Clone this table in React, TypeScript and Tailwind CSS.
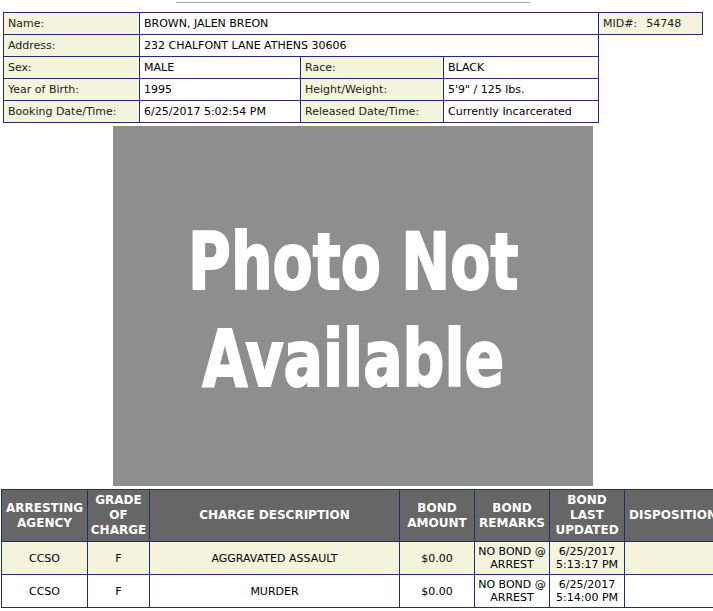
import React from "react";

const NAVY = "bg-[#1f2d7a]";

function Label({ children, className = "" }: { children: React.ReactNode; className?: string }) {
  return (
    <div className={`bg-[#f4f4dc] px-[4px] leading-[21px] h-[21px] text-[#222] whitespace-nowrap ${className}`}>{children}</div>
  );
}
function Value({ children, className = "" }: { children: React.ReactNode; className?: string }) {
  return (
    <div className={`bg-white px-[4px] leading-[21px] h-[21px] text-black whitespace-nowrap ${className}`}>{children}</div>
  );
}

function H({ children }: { children: React.ReactNode }) {
  return (
    <div className="bg-[#666666] text-white font-bold text-[12px] leading-[15px] flex items-center justify-center text-center px-[2px]">
      <span>{children}</span>
    </div>
  );
}
function C({ children, tan }: { children?: React.ReactNode; tan?: boolean }) {
  return (
    <div
      className={`${tan ? "bg-[#f4f4dc]" : "bg-white"} text-black text-[11px] leading-[13px] flex items-center justify-center text-center px-[2px]`}
    >
      <span>{children}</span>
    </div>
  );
}

export default function App() {
  const rows = [
    { tan: true, charge: "AGGRAVATED ASSAULT", upd1: "6/25/2017", upd2: "5:13:17 PM" },
    { tan: false, charge: "MURDER", upd1: "6/25/2017", upd2: "5:14:00 PM" },
  ];
  return (
    <div className="w-[713px] h-[611px] overflow-hidden bg-white text-[11px]" style={{ fontFamily: '"DejaVu Sans", Verdana, sans-serif' }}>
      <div className="mt-[2px] ml-[176px] w-[354px] h-px bg-[#a4a4a4]" />

      <div className="mt-[9px] ml-[3px] flex items-start">
        <div className={`grid grid-cols-[135px_160px_142px_154px] gap-px p-px ${NAVY}`}>
          <Label>Name:</Label>
          <Value className="col-span-3">BROWN, JALEN BREON</Value>
          <Label>Address:</Label>
          <Value className="col-span-3">232 CHALFONT LANE ATHENS 30606</Value>
          <Label>Sex:</Label>
          <Value>MALE</Value>
          <Label>Race:</Label>
          <Value>BLACK</Value>
          <Label>Year of Birth:</Label>
          <Value>1995</Value>
          <Label>Height/Weight:</Label>
          <Value>5'9" / 125 lbs.</Value>
          <Label>Booking Date/Time:</Label>
          <Value>6/25/2017 5:02:54 PM</Value>
          <Label>Released Date/Time:</Label>
          <Value>Currently Incarcerated</Value>
        </div>
        <div className="-ml-px border border-[#1f2d7a] w-[105px] h-[23px] bg-[#f4f4dc] pl-[4px] leading-[21px] text-[#222] whitespace-nowrap">
          MID#:<span className="ml-[9px]">54748</span>
        </div>
      </div>

      <div className="mt-[3px] ml-[113px] w-[480px] h-[360px] bg-[#8e8e8e] flex flex-col items-center pt-[88px]">
        <div className="scale-x-75 text-white font-bold text-[78px] leading-[97px] whitespace-nowrap text-center [-webkit-text-stroke:2px_white]">
          <div>Photo Not</div>
          <div>Available</div>
        </div>
      </div>

      <div className="mt-[3px] ml-[1px]">
        <div
          className={`grid grid-cols-[85px_61px_249px_74px_74px_74px_96px] grid-rows-[51px_32px_32px] gap-px p-px w-max ${NAVY}`}
        >
          <H>ARRESTING AGENCY</H>
          <H>GRADE OF CHARGE</H>
          <H>CHARGE DESCRIPTION</H>
          <H>BOND AMOUNT</H>
          <H>BOND REMARKS</H>
          <H>BOND LAST UPDATED</H>
          <H>DISPOSITION</H>
          {rows.map((r, i) => (
            <React.Fragment key={i}>
              <C tan={r.tan}>CCSO</C>
              <C tan={r.tan}>F</C>
              <C tan={r.tan}>{r.charge}</C>
              <C tan={r.tan}>$0.00</C>
              <C tan={r.tan}>
                NO BOND @<br />ARREST
              </C>
              <C tan={r.tan}>
                {r.upd1}
                <br />
                {r.upd2}
              </C>
              <C tan={r.tan}></C>
            </React.Fragment>
          ))}
        </div>
      </div>
    </div>
  );
}
